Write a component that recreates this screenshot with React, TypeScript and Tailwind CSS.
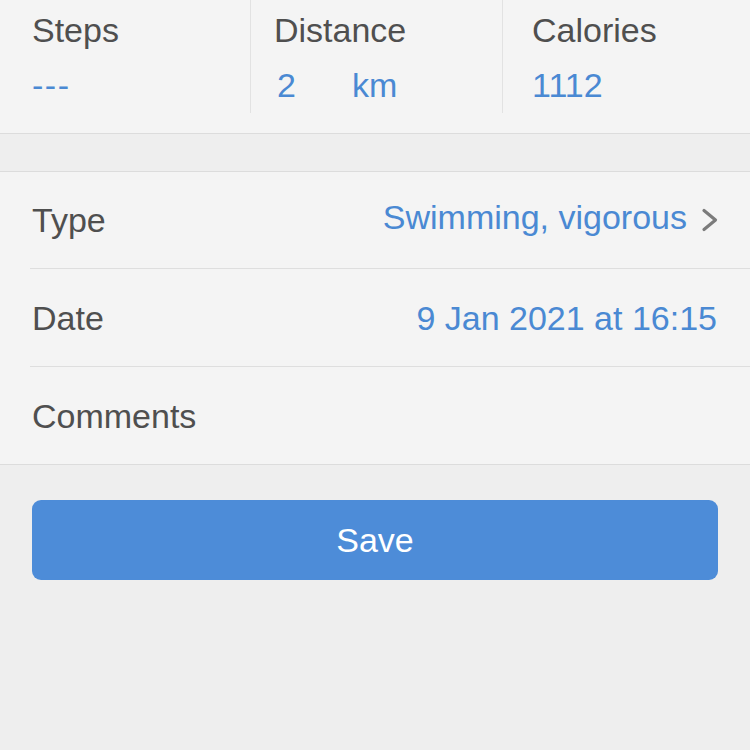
import React from "react";

const font = { fontFamily: '"Liberation Sans", Arial, sans-serif' };

export default function App() {
  return (
    <div className="w-[750px] h-[750px] bg-[#eeeeee] overflow-hidden" style={font}>
      {/* Stats panel */}
      <div className="bg-[#f4f4f4] border-b border-[#dcdcdc] pb-[20px] flex">
        <div className="w-[251px] h-[113px] border-r border-[#e2e2e2] pl-[32px] pt-[10px]">
          <div className="text-[34px] leading-[40px] text-[#4f4f4f]">Steps</div>
          <div className="mt-[15px] text-[34px] leading-[40px] text-[#4a89d3] tracking-[1.5px]">---</div>
        </div>
        <div className="w-[252px] h-[113px] border-r border-[#e2e2e2] pl-[23px] pt-[10px]">
          <div className="text-[34px] leading-[40px] text-[#4f4f4f]">Distance</div>
          <div className="mt-[15px] text-[34px] leading-[40px] text-[#4a89d3] flex">
            <span className="w-[78px] pl-[3px]">2</span>
            <span>km</span>
          </div>
        </div>
        <div className="flex-1 h-[113px] pl-[29px] pt-[10px]">
          <div className="text-[34px] leading-[40px] text-[#4f4f4f]">Calories</div>
          <div className="mt-[15px] text-[34px] leading-[40px] text-[#4a89d3]">1112</div>
        </div>
      </div>

      {/* Gap */}
      <div className="h-[37px]" />

      {/* List */}
      <div className="bg-[#f4f4f4] border-y border-[#dcdcdc]">
        <div className="ml-[30px] h-[97px] border-b border-[#dedede] flex items-center justify-between pr-[31px]">
          <span className="pl-[2px] text-[34px] leading-[40px] text-[#4f4f4f]">Type</span>
          <div className="flex items-center">
            <span className="text-[34px] leading-[40px] text-[#4a89d3] mb-[6px]">Swimming, vigorous</span>
            <svg className="ml-[14px]" width="18" height="24" viewBox="0 0 18 24" fill="none">
              <path d="M3 2.5 L14.5 12 L3 21.5" stroke="#7b7b7b" strokeWidth="3.2" strokeLinecap="round" strokeLinejoin="round" />
            </svg>
          </div>
        </div>
        <div className="ml-[30px] h-[98px] border-b border-[#dedede] flex items-center justify-between pr-[33px]">
          <span className="pl-[2px] text-[34px] leading-[40px] text-[#4f4f4f]">Date</span>
          <span className="text-[34px] leading-[40px] text-[#4a89d3]">9 Jan 2021 at 16:15</span>
        </div>
        <div className="ml-[30px] h-[97px] flex items-center">
          <span className="pl-[2px] text-[34px] leading-[40px] text-[#4f4f4f]">Comments</span>
        </div>
      </div>

      {/* Save button */}
      <div className="px-[32px] pt-[35px]">
        <button className="w-full h-[80px] rounded-[9px] bg-[#4d8cd8] text-white text-[34px] leading-[40px] flex items-center justify-center" style={font}>
          Save
        </button>
      </div>
    </div>
  );
}
